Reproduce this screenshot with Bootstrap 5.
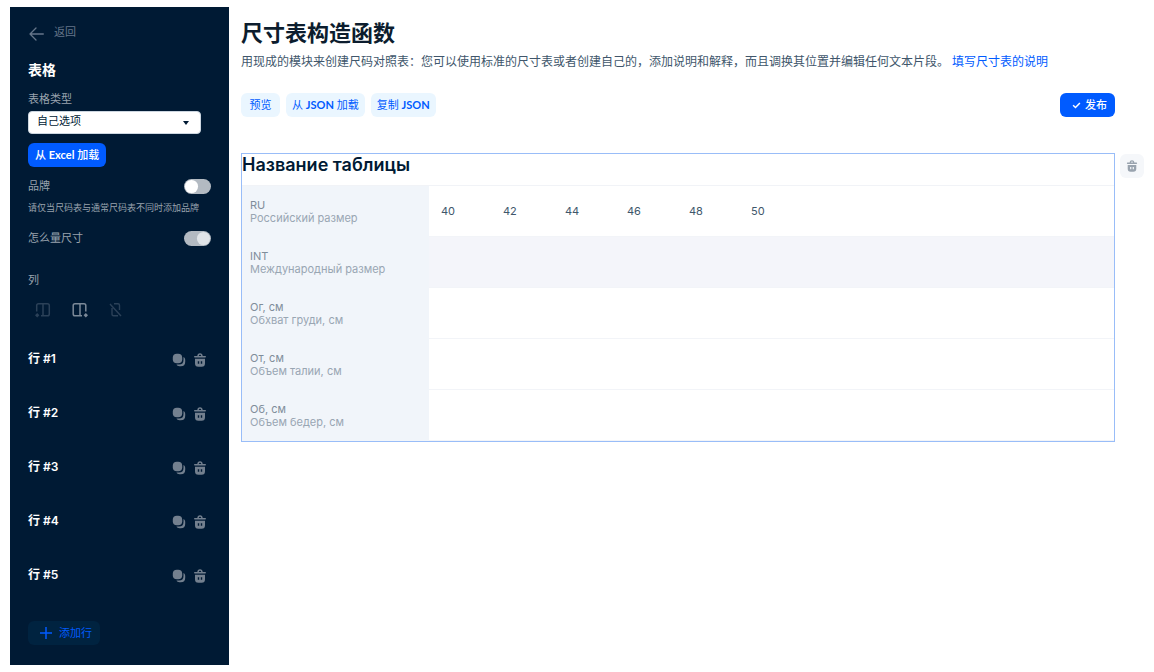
<!DOCTYPE html>
<html lang="zh-CN">
<head>
<meta charset="utf-8">
<meta name="viewport" content="width=device-width, initial-scale=1">
<title>尺寸表构造函数</title>
<link href="https://cdn.jsdelivr.net/npm/bootstrap@5.3.0/dist/css/bootstrap.min.css" rel="stylesheet">
<style>
  body { font-family: Inter, "Noto Sans CJK SC", sans-serif; font-size: 11px; line-height: 16px; color: #001a34; background: #fff; }
  a { text-decoration: none; color: #005bff; }
  .app-shell { padding: 7px 10px; gap: 12px; }
  .side-panel { width: 219px; background: #001a34; color: #99a3ae; padding: 16px 18px 20px; }
  .back-link { color: #66768a; gap: 10px; line-height: 20px; }
  .back-link svg { margin-top: 4px; }
  .side-title { font-size: 14px; line-height: 20px; font-weight: 700; color: #fff; margin: 19px 0 11px; }
  .side-select { width: 173px; height: 23px; min-height: 0; padding: 0 24px 2px 8px; font-size: 11px; line-height: 19px; color: #001a34; border: 1px solid #ccd6e0; border-radius: 4px;
    background: #fff url("data:image/svg+xml,%3Csvg xmlns='http://www.w3.org/2000/svg' viewBox='0 0 6 4'%3E%3Cpath d='M0 0h6L3 4z' fill='%23001a34'/%3E%3C/svg%3E") no-repeat right 11px center / 6px 4px; }
  .excel-btn { margin-top: 9px; }
  .tool-btn { --bs-btn-font-size: 11px; --bs-btn-line-height: 16px; --bs-btn-padding-x: 7px; --bs-btn-padding-y: 3px; --bs-btn-border-radius: 6px; --bs-btn-font-weight: 400;
    --bs-btn-color: #005bff; --bs-btn-bg: #eaf6ff; --bs-btn-hover-color: #005bff; --bs-btn-hover-bg: #d8edff; height: 24px; min-width: 39px; border: 0; font-family: Lato, "Noto Sans CJK SC", sans-serif; }
  .tool-btn b { font-weight: 700; }
  .json-btn { --bs-btn-padding-x: 6px; }
  .solid-btn { --bs-btn-font-weight: 500; --bs-btn-color: #fff; --bs-btn-bg: #005bff; --bs-btn-hover-color: #fff; --bs-btn-hover-bg: #0050e0; }
  .publish-btn, .ghost-btn { --bs-btn-padding-x: 8px; }
  .ghost-btn { --bs-btn-bg: #002340; --bs-btn-hover-bg: #002c50; width: 72px; }
  .switch-row { min-height: 16px; margin-top: 11px; }
  .hint + .switch-row { margin-top: 14px; }
  .switch-row .form-check-input { width: 27px; height: 15px; margin: 0; border: 0; background-color: #b3bac2; background-size: 15px 15px;
    background-image: url("data:image/svg+xml,%3Csvg xmlns='http://www.w3.org/2000/svg' viewBox='0 0 16 16'%3E%3Ccircle cx='8' cy='8' r='7' fill='%23fff'/%3E%3C/svg%3E"); opacity: 1; }
  .switch-row .form-check-input:disabled { background-image: url("data:image/svg+xml,%3Csvg xmlns='http://www.w3.org/2000/svg' viewBox='0 0 16 16'%3E%3Ccircle cx='8' cy='8' r='7' fill='%23e0e4e8'/%3E%3C/svg%3E"); }
  .switch-row label { opacity: 1 !important; }
  .hint { font-size: 9px; white-space: nowrap; margin-top: 6px; }
  .columns-label { margin-top: 26px; }
  .icon-btn { border: 0; background: none; padding: 0; line-height: 0; color: #73808f; }
  .column-tools { gap: 21px; padding-left: 7px; margin-top: 14px; }
  .column-tools .icon-btn { color: #7b8998; }
  .column-tools .icon-btn:disabled { color: #2b4158; }
  .row-list { margin: 14px 0 19px; }
  .row-list li { height: 54px; padding-right: 4px; color: #fff; font-size: 12px; font-weight: 600; }
  .row-list .icon-btn { margin: 2px 0 0 7px; }
  .content-area { min-width: 0; padding-top: 10px; }
  h1 { font-size: 22px; line-height: 32px; font-weight: 700; color: #0c1d2e; margin: 0 0 3px; }
  .intro { font-size: 12px; line-height: 20px; color: #40566b; margin: 0 0 21px; }
  .intro a { margin-left: 3px; }
  .toolbar { gap: 6px; margin-right: 29px; margin-bottom: 36px; }
  .table-area { gap: 5px; }
  .table-frame { border: 1px solid #99bdf8; }
  .table-name { font-size: 18px; line-height: 22px; font-weight: 600; height: 32px; margin: 0; border-bottom: 1px solid #f1f3f7; }
  .size-table { width: 100%; table-layout: fixed; border-collapse: separate; border-spacing: 0; line-height: 13px; }
  .size-table th { width: 187px; height: 51px; padding: 0 8px; background: #f1f5fa; font-weight: 400; color: #808d9a; }
  .size-table th small { display: block; font-size: 11px; color: #99a6b3; }
  .size-table td { width: 62px; padding: 0 0 0 12px; border-bottom: 1px solid #f2f4f8; color: #40566b; }
  .size-table td:last-child { width: auto; }
  .size-table tr.tinted td { background: #f4f5fa; }
  .frame-remove { flex: none; width: 24px; height: 24px; border-radius: 6px; background: #f5f7fa; color: #99a3ae; margin-top: 1px; }
</style>
</head>
<body>
<svg class="d-none" aria-hidden="true">
  <symbol id="icon-copy" viewBox="0 0 14 14"><rect x=".8" y=".8" width="9.400" height="9.400" rx="4" fill="currentColor"/><path d="M11.500 4c1.100.6 1.700 1.500 1.700 3v1.700c0 3-1.500 4.500-4.500 4.500H7.500c-1.500 0-2.500-.6-3-1.700H7c3 0 4.500-1.500 4.500-4.500z" fill="currentColor"/></symbol>
  <symbol id="icon-trash" viewBox="0 0 14 14"><path d="M4.300 3C4.500 1.200 5.300.3 7 .3S9.500 1.200 9.700 3h2.500c.5 0 .8.300.8.800s-.3.800-.8.800H1.800c-.5 0-.8-.3-.8-.8s.3-.8.800-.8zm1.500 0h2.400C8.100 2.100 7.700 1.700 7 1.700S5.900 2.100 5.800 3zM2 5.700h10v4.500c0 2.500-1 3.500-3.500 3.500h-3C3 13.700 2 12.700 2 10.200zm2.800 2.500v2.600h1.400V8.200zm3 0v2.600h1.400V8.200z" fill="currentColor" fill-rule="evenodd"/></symbol>
</svg>
<div class="app-shell d-flex align-items-start">
  <aside class="side-panel flex-shrink-0">
    <a href="#" class="back-link d-flex align-items-start">
      <svg width="16" height="14" viewBox="0 0 16 14" fill="none" stroke="currentColor" stroke-width="1.300" stroke-linecap="round" stroke-linejoin="round"><path d="M15.300 7H2M8 1L2 7l6 6"/></svg>
      <span class="lh-1 pt-1">返回</span>
    </a>
    <h2 class="side-title">表格</h2>
    <label for="tableType" class="d-block mb-1">表格类型</label>
    <select id="tableType" class="form-select side-select"><option>自己选项</option></select>
    <button type="button" class="btn tool-btn solid-btn excel-btn">从 <b>Excel</b> 加载</button>
    <div class="switch-row form-switch d-flex justify-content-between align-items-center p-0">
      <label for="brand">品牌</label><input id="brand" class="form-check-input" type="checkbox" role="switch">
    </div>
    <div class="hint">请仅当尺码表与通常尺码表不同时添加品牌</div>
    <div class="switch-row form-switch d-flex justify-content-between align-items-center p-0">
      <label for="measure">怎么量尺寸</label><input id="measure" class="form-check-input" type="checkbox" role="switch" checked disabled>
    </div>
    <div class="columns-label">列</div>
    <div class="column-tools d-flex align-items-center">
      <button type="button" class="icon-btn" disabled aria-label="在左侧添加列"><svg width="16" height="16" viewBox="0 0 16 16" fill="none" stroke="currentColor" stroke-width="1.500"><path d="M1.700 9.500V3.500Q1.700 1.700 3.500 1.700h9Q14.300 1.700 14.300 3.500v8.500Q14.300 13.800 12.500 13.800H6M8 1.700v12"/><path d="M2.200 11l2.200 2.300-2.200 2.300L0 13.300z" fill="currentColor" stroke="none"/></svg></button>
      <button type="button" class="icon-btn" aria-label="在右侧添加列"><svg width="16" height="16" viewBox="0 0 16 16" fill="none" stroke="currentColor" stroke-width="1.500"><path d="M13.800 9.500V3.500Q13.800 1.700 12 1.700H3Q1.200 1.700 1.200 3.500v8.500Q1.200 13.800 3 13.800h7M8 1.700v12"/><path d="M13.800 11l2.200 2.300-2.200 2.300-2.200-2.300z" fill="currentColor" stroke="none"/></svg></button>
      <button type="button" class="icon-btn" disabled aria-label="删除列"><svg width="14" height="16" viewBox="0 0 14 16" fill="none" stroke="currentColor" stroke-width="1.400"><path d="M1 2l11 12M5 1.700h4Q10.500 1.700 10.500 3.200V8M3 6v6.300Q3 13.800 4.500 13.800h4.500"/></svg></button>
    </div>
    <ul class="row-list list-unstyled">
      <li class="d-flex align-items-center"><span class="me-auto">行 #1</span><button type="button" class="icon-btn" aria-label="复制"><svg width="14" height="14"><use href="#icon-copy"/></svg></button><button type="button" class="icon-btn" aria-label="删除"><svg width="14" height="14"><use href="#icon-trash"/></svg></button></li>
      <li class="d-flex align-items-center"><span class="me-auto">行 #2</span><button type="button" class="icon-btn" aria-label="复制"><svg width="14" height="14"><use href="#icon-copy"/></svg></button><button type="button" class="icon-btn" aria-label="删除"><svg width="14" height="14"><use href="#icon-trash"/></svg></button></li>
      <li class="d-flex align-items-center"><span class="me-auto">行 #3</span><button type="button" class="icon-btn" aria-label="复制"><svg width="14" height="14"><use href="#icon-copy"/></svg></button><button type="button" class="icon-btn" aria-label="删除"><svg width="14" height="14"><use href="#icon-trash"/></svg></button></li>
      <li class="d-flex align-items-center"><span class="me-auto">行 #4</span><button type="button" class="icon-btn" aria-label="复制"><svg width="14" height="14"><use href="#icon-copy"/></svg></button><button type="button" class="icon-btn" aria-label="删除"><svg width="14" height="14"><use href="#icon-trash"/></svg></button></li>
      <li class="d-flex align-items-center"><span class="me-auto">行 #5</span><button type="button" class="icon-btn" aria-label="复制"><svg width="14" height="14"><use href="#icon-copy"/></svg></button><button type="button" class="icon-btn" aria-label="删除"><svg width="14" height="14"><use href="#icon-trash"/></svg></button></li>
    </ul>
    <button type="button" class="btn tool-btn ghost-btn d-flex align-items-center justify-content-end"><svg class="me-auto ms-1 flex-shrink-0" width="12" height="12" viewBox="0 0 12 12" stroke="currentColor" stroke-width="1.500"><path d="M6 0v12M0 6h12"/></svg><span>添加行</span></button>
  </aside>

  <main class="content-area flex-grow-1">
    <h1>尺寸表构造函数</h1>
    <p class="intro">用现成的模块来创建尺码对照表：您可以使用标准的尺寸表或者创建自己的，添加说明和解释，而且调换其位置并编辑任何文本片段。<a href="#">填写尺寸表的说明</a></p>
    <div class="toolbar d-flex">
      <button type="button" class="btn tool-btn">预览</button>
      <button type="button" class="btn tool-btn json-btn">从 <b>JSON</b> 加载</button>
      <button type="button" class="btn tool-btn json-btn">复制 <b>JSON</b></button>
      <button type="button" class="btn tool-btn solid-btn publish-btn ms-auto d-flex align-items-center"><svg class="mx-1" width="9" height="7" viewBox="0 0 8 7" fill="none" stroke="currentColor" stroke-width="1.500"><path d="M.6 3.200L3 5.500 7.400 1"/></svg><span>发布</span></button>
    </div>
    <div class="table-area d-flex align-items-start">
      <section class="table-frame flex-grow-1">
        <h2 class="table-name">Название таблицы</h2>
        <table class="size-table">
          <tbody>
            <tr><th scope="row">RU<small>Российский размер</small></th><td>40</td><td>42</td><td>44</td><td>46</td><td>48</td><td>50</td><td></td></tr>
            <tr class="tinted"><th scope="row">INT<small>Международный размер</small></th><td></td><td></td><td></td><td></td><td></td><td></td><td></td></tr>
            <tr><th scope="row">Ог, см<small>Обхват груди, см</small></th><td></td><td></td><td></td><td></td><td></td><td></td><td></td></tr>
            <tr><th scope="row">От, см<small>Объем талии, см</small></th><td></td><td></td><td></td><td></td><td></td><td></td><td></td></tr>
            <tr><th scope="row">Об, см<small>Объем бедер, см</small></th><td></td><td></td><td></td><td></td><td></td><td></td><td></td></tr>
          </tbody>
        </table>
      </section>
      <button type="button" class="icon-btn frame-remove" aria-label="删除表格"><svg width="12" height="12"><use href="#icon-trash"/></svg></button>
    </div>
  </main>
</div>
<script src="https://cdn.jsdelivr.net/npm/bootstrap@5.3.0/dist/js/bootstrap.bundle.min.js"></script>
</body>
</html>
